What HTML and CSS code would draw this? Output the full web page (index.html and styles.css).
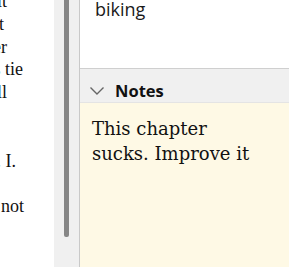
FILE: index.html
```html
<!DOCTYPE html>
<html lang="en">
<head>
  <meta charset="UTF-8">
  <title>Chapter notes</title>
  <link rel="stylesheet" href="styles.css">
</head>
<body>
  <div class="doc">
    <div class="doc-text">
      <div class="ln off-17">and after a while I thought about it</div>
      <div class="ln off-20">nobody was going to notice that</div>
      <div class="ln off-17">so we rode on until it got darker</div>
      <div class="ln off-1">he kept fiddling with his tie</div>
      <div class="ln off-17">and then we came down the hill</div>
      <div class="ln off-out">where the road bends</div>
      <div class="ln off-out">towards the lake</div>
      <div class="ln off-8">Nobody told me. I.</div>
      <div class="ln off-out">I stopped there</div>
      <div class="ln">and I still do not</div>
      <div class="ln off-out">know why</div>
      <div class="ln off-out">we went</div>
    </div>
  </div>

  <div class="gutter">
    <div class="thumb"></div>
  </div>

  <aside class="side">
    <div class="editor">
      <div class="editor-line">biking</div>
    </div>
    <div class="notes-head">
      <svg class="chevron" width="16" height="16" viewBox="0 0 16 16">
        <path d="M1.5 4.5 L8 11 L14.5 4.5" fill="none" stroke="#666" stroke-width="1.4"/>
      </svg>
      <span class="notes-title">Notes</span>
    </div>
    <div class="notes-body">This chapter sucks. Improve it</div>
  </aside>
</body>
</html>
```

FILE: styles.css
```css
html, body {
  height: 100%;
}

body {
  margin: 0;
  display: flex;
  overflow: hidden;
  background-color: #fff;
}

.doc {
  width: 54px;
  flex-shrink: 0;
  overflow: hidden;
  background-color: #fff;
}

.doc-text {
  margin-top: -10px;
  font-family: "Liberation Serif", serif;
  font-size: 18px;
  line-height: 22.8px;
  color: #111;
}

.ln {
  display: flex;
  justify-content: flex-end;
  white-space: nowrap;
  padding-right: 30px;
}

.off-1 { padding-right: 31px; }
.off-8 { padding-right: 38px; }
.off-17 { padding-right: 47px; }
.off-20 { padding-right: 50px; }
.off-out { padding-right: 90px; }

.gutter {
  width: 25px;
  flex-shrink: 0;
  background-color: #f0f0f0;
  padding-left: 10px;
  box-sizing: border-box;
}

.thumb {
  width: 5px;
  height: 237px;
  background-color: #868686;
  border-radius: 0 0 2px 2px;
}

.side {
  flex: 1;
  display: flex;
  flex-direction: column;
  border-left: 1px solid #c9c9c9;
  font-family: "Open Sans", sans-serif;
}

.editor {
  height: 68px;
  border-bottom: 1px solid #cfcfcf;
  background-color: #fff;
  padding-left: 15px;
}

.editor-line {
  font-size: 18px;
  line-height: 18px;
  color: #1a1a1a;
}

.notes-head {
  height: 34px;
  box-sizing: border-box;
  padding: 11px 0 0 9px;
  display: flex;
  align-items: center;
  background-color: #f0f0f0;
  border-bottom: 1px solid #e4e4e4;
}

.chevron {
  display: block;
  margin-right: 10px;
}

.notes-title {
  font-weight: bold;
  font-size: 16.5px;
  line-height: 22px;
  color: #111;
}

.notes-body {
  flex: 1;
  background-color: #fef9e5;
  padding: 13px 30px 0 12px;
  font-family: "DejaVu Serif", serif;
  font-size: 18px;
  line-height: 25px;
  color: #111;
}
```
